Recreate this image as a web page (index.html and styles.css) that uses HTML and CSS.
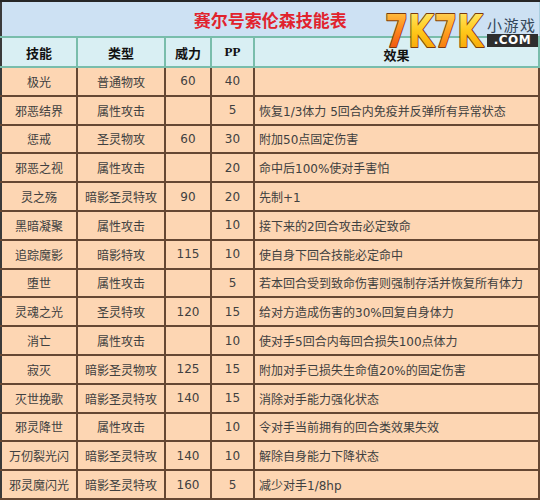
FILE: index.html
```html
<!DOCTYPE html>
<html lang="zh-CN">
<head>
<meta charset="utf-8">
<title>赛尔号索伦森技能表</title>
<link rel="stylesheet" href="styles.css">
</head>
<body>
<div class="page">
  <table class="skills">
    <colgroup>
      <col class="c1"><col class="c2"><col class="c3"><col class="c4"><col class="c5">
    </colgroup>
    <tr class="title"><th colspan="5">赛尔号索伦森技能表</th></tr>
    <tr class="head"><th>技能</th><th>类型</th><th>威力</th><th class="pp">PP</th><th><span class="effh">效果</span></th></tr>
    <tr><td>极光</td><td>普通物攻</td><td>60</td><td>40</td><td class="eff"></td></tr>
    <tr><td>邪恶结界</td><td>属性攻击</td><td></td><td>5</td><td class="eff">恢复1/3体力 5回合内免疫并反弹所有异常状态</td></tr>
    <tr><td>惩戒</td><td>圣灵物攻</td><td>60</td><td>30</td><td class="eff">附加50点固定伤害</td></tr>
    <tr><td>邪恶之视</td><td>属性攻击</td><td></td><td>20</td><td class="eff">命中后100%使对手害怕</td></tr>
    <tr><td>灵之殇</td><td>暗影圣灵特攻</td><td>90</td><td>20</td><td class="eff">先制+1</td></tr>
    <tr><td>黑暗凝聚</td><td>属性攻击</td><td></td><td>10</td><td class="eff">接下来的2回合攻击必定致命</td></tr>
    <tr><td>追踪魔影</td><td>暗影特攻</td><td>115</td><td>10</td><td class="eff">使自身下回合技能必定命中</td></tr>
    <tr><td>堕世</td><td>属性攻击</td><td></td><td>5</td><td class="eff">若本回合受到致命伤害则强制存活并恢复所有体力</td></tr>
    <tr><td>灵魂之光</td><td>圣灵特攻</td><td>120</td><td>15</td><td class="eff">给对方造成伤害的30%回复自身体力</td></tr>
    <tr><td>消亡</td><td>属性攻击</td><td></td><td>10</td><td class="eff">使对手5回合内每回合损失100点体力</td></tr>
    <tr><td>寂灭</td><td>暗影圣灵物攻</td><td>125</td><td>15</td><td class="eff">附加对手已损失生命值20%的固定伤害</td></tr>
    <tr><td>灭世挽歌</td><td>暗影圣灵特攻</td><td>140</td><td>15</td><td class="eff">消除对手能力强化状态</td></tr>
    <tr><td>邪灵降世</td><td>属性攻击</td><td></td><td>10</td><td class="eff">令对手当前拥有的回合类效果失效</td></tr>
    <tr><td>万仞裂光闪</td><td>暗影圣灵特攻</td><td>140</td><td>10</td><td class="eff">解除自身能力下降状态</td></tr>
    <tr><td>邪灵魔闪光</td><td>暗影圣灵特攻</td><td>160</td><td>5</td><td class="eff">减少对手1/8hp</td></tr>
  </table>
  <div class="logo">
    <svg class="logo-mark" width="102" height="40" viewBox="0 0 102 40">
      <defs>
        <linearGradient id="gRed" x1="0" y1="0" x2="0" y2="1">
          <stop offset="0" stop-color="#ffd24a"/>
          <stop offset="0.45" stop-color="#ff8a1e"/>
          <stop offset="1" stop-color="#e8400e"/>
        </linearGradient>
        <linearGradient id="gYel" x1="0" y1="0" x2="0" y2="1">
          <stop offset="0" stop-color="#fff07a"/>
          <stop offset="0.5" stop-color="#ffc81a"/>
          <stop offset="1" stop-color="#f59a00"/>
        </linearGradient>
        <linearGradient id="gOra" x1="0" y1="0" x2="0" y2="1">
          <stop offset="0" stop-color="#ffe060"/>
          <stop offset="0.5" stop-color="#ffa020"/>
          <stop offset="1" stop-color="#f06a08"/>
        </linearGradient>
      </defs>
      <text x="2" y="36" font-family="DejaVu Sans" font-weight="bold" font-size="44" textLength="98" lengthAdjust="spacingAndGlyphs" stroke="#7a3a0c" stroke-width="2.2" paint-order="stroke" stroke-linejoin="round"><tspan fill="url(#gRed)">7</tspan><tspan fill="url(#gYel)">K</tspan><tspan fill="url(#gOra)">7</tspan><tspan fill="url(#gYel)">K</tspan></text>
    </svg>
    <div class="logo-side">
      <span class="logo-cn">小游戏</span>
      <span class="logo-com">.COM</span>
    </div>
  </div>
</div>
</body>
</html>
```

FILE: styles.css
```css
html, body {
  margin: 0;
  padding: 0;
  background: #ffffff;
}

.page {
  position: relative;
  width: 543px;
  height: 500px;
  overflow: hidden;
}

.skills {
  width: 540px;
  table-layout: fixed;
  border-collapse: collapse;
  border-top: 2px solid #262626;
  border-left: 2px solid #3a3a3a;
  font-family: "DejaVu Sans", "Noto Sans CJK SC", sans-serif;
}

.c1 { width: 76px; }
.c2 { width: 88px; }
.c3 { width: 46px; }
.c4 { width: 43px; }
.c5 { width: 285px; }

.title th {
  height: 34px;
  padding: 0;
  background: #cde1f3;
  color: #e1232d;
  font-family: "Noto Sans CJK SC", sans-serif;
  font-size: 17px;
  font-weight: bold;
  text-align: center;
  border-bottom: 1px solid #7bbcae;
  border-right: 1px solid #a9cfe0;
}

.head th {
  height: 28px;
  padding: 0;
  background: #d9eff3;
  color: #111111;
  font-family: "Noto Sans CJK SC", sans-serif;
  font-size: 13px;
  font-weight: bold;
  text-align: center;
  border: 2px solid #79bdab;
  border-left-color: #3a3a3a;
}

.head th + th {
  border-left-color: #79bdab;
}

.head th.pp {
  font-family: "Liberation Serif", serif;
  font-size: 13px;
}

.effh {
  position: relative;
  top: 2px;
}

.skills td {
  height: 26.8px;
  padding: 0;
  background: #fdd6b3;
  color: #404040;
  font-size: 12px;
  text-align: center;
  border: 2px solid #654733;
}

.skills td:first-child {
  border-left-color: #3a3a3a;
}

.skills td.eff {
  text-align: left;
  padding-left: 4px;
  white-space: nowrap;
}

.logo {
  position: absolute;
  left: 383px;
  top: 11px;
  display: flex;
  gap: 2px;
}

.logo-mark {
  display: block;
  overflow: visible;
}

.logo-side {
  display: flex;
  flex-direction: column;
  padding-top: 6px;
  gap: 1px;
}

.logo-cn {
  display: block;
  height: 16px;
  font-family: "Noto Sans CJK SC", sans-serif;
  font-size: 15px;
  line-height: 16px;
  letter-spacing: 1.5px;
  color: #33475a;
}

.logo-com {
  display: block;
  width: 51px;
  height: 13px;
  background: #2e2e2e;
  color: #ffffff;
  font-family: "DejaVu Sans", sans-serif;
  font-size: 12px;
  font-weight: bold;
  line-height: 13px;
  letter-spacing: 0.5px;
  text-align: center;
}
```
